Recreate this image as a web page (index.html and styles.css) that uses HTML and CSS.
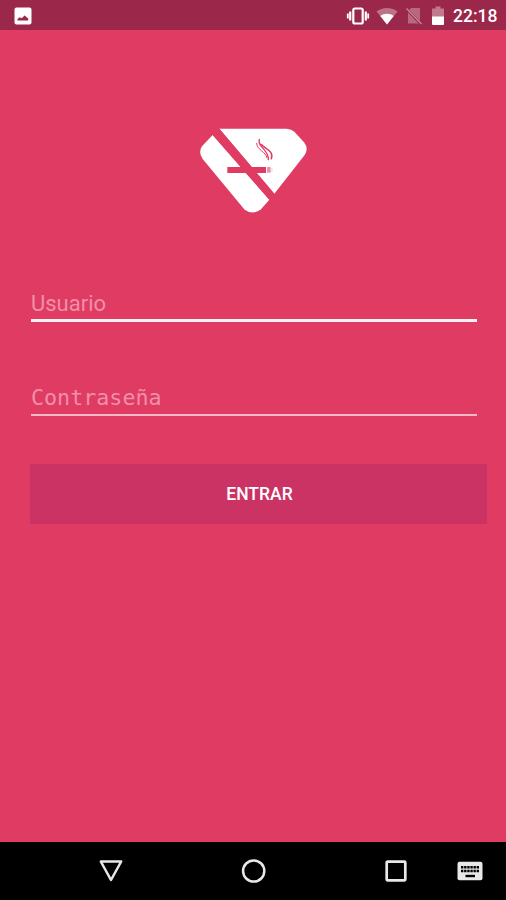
FILE: index.html
```html
<!DOCTYPE html>
<html lang="es">
<head>
<meta charset="utf-8">
<title>Entrar</title>
<link rel="stylesheet" href="styles.css">
</head>
<body>

<header class="status">
  <svg class="picture" width="18" height="18" viewBox="0 0 18 18">
    <rect x="0.5" y="0.5" width="17" height="17" rx="2" fill="#fff"/>
    <path d="M3.500 13.500v-1.500l2.200-1.800 2 1 2.900-2.600 3.600 3v1.900z" fill="#9b274b"/>
  </svg>
  <svg class="vibrate" width="24" height="20" viewBox="0 0 24 20" fill="none" stroke="#fff">
    <rect x="7.300" y="2.500" width="9.400" height="15" rx="1.500" stroke-width="2.200"/>
    <path d="M4.200 5.500v9M19.800 5.500v9" stroke-width="2.200"/>
    <path d="M1.800 7.500v5M22.200 7.500v5" stroke-width="1.800"/>
  </svg>
  <svg class="wifi" width="22" height="18" viewBox="0 0 22 18">
    <path d="M11 17.500L0.500 4.500C6-0.200 16-0.200 21.500 4.500z" fill="#fff" opacity=".35"/>
    <path d="M11 17.500L4.300 9C8 6 14 6 17.700 9z" fill="#fff"/>
  </svg>
  <svg class="sim" width="16" height="18" viewBox="0 0 16 18">
    <path d="M5 1h9v15.500H2V4z" fill="#fff" opacity=".3"/>
    <path d="M0.500 2l14 14.500" stroke="#9b274b" stroke-width="2.600"/>
    <path d="M0.500 1.500l15 15.500" stroke="#c98ba0" stroke-width="1.200"/>
  </svg>
  <svg class="battery" width="12" height="20" viewBox="0 0 12 20">
    <path d="M3.500 0.500h5v2H12V11H0V2.500h3.500z" fill="#fff" opacity=".38"/>
    <path d="M0 10.500h12v7.500q0 1-1 1H1q-1 0-1-1z" fill="#fff"/>
  </svg>
  <span class="clock">22:18</span>
</header>

<main class="login">
  <svg class="logo" width="110" height="88" viewBox="24 36 330 264">
    <g fill="#fff">
      <path d="M88 41H290Q305 42 313 50L342 82Q357 101 344 120L253 236Z"/>
      <path d="M68 60L238 254L213 283Q190 302 164 284L38 132Q24 112 36 94Z"/>
    </g>
    <!-- cigarette -->
    <path d="M112 156H228V174H112Z" fill="#df3b63"/>
    <path d="M88 41L68 60L238 254L253 236Z" fill="#df3b63"/>
    <rect x="231" y="156" width="11" height="17" rx="2" fill="#ee91a7"/>
    <path d="M245 159q3 5 0 12" stroke="#f5b9c7" stroke-width="2" fill="none"/>
    <!-- smoke -->
    <g fill="none" stroke="#df3b63" stroke-linecap="round">
      <path d="M208 73C201 97 238 104 235 134" stroke-width="4"/>
      <path d="M200 85C201 106 228 110 231 128" stroke-width="3"/>
      <path d="M215 89C227 103 252 107 244 131" stroke-width="4.500"/>
    </g>
  </svg>
  <form class="form">
    <input class="field user" type="text" placeholder="Usuario" aria-label="Usuario">
    <input class="field pass" type="password" placeholder="Contraseña" aria-label="Contraseña">
    <button class="enter" type="button">ENTRAR</button>
  </form>
</main>

<nav class="navbar">
  <svg class="back" width="26" height="24" viewBox="0 0 26 24">
    <path d="M2.800 2.500H23.200L13 21z" fill="none" stroke="#e8e8e8" stroke-width="2.500" stroke-linejoin="round"/>
  </svg>
  <svg class="home" width="26" height="26" viewBox="0 0 26 26">
    <circle cx="12.700" cy="13" r="10.600" fill="none" stroke="#e8e8e8" stroke-width="2.500"/>
  </svg>
  <svg class="recent" width="22" height="22" viewBox="0 0 22 22">
    <rect x="1.700" y="1.700" width="18.600" height="18.600" rx="0.800" fill="none" stroke="#e8e8e8" stroke-width="2.700"/>
  </svg>
  <svg class="keyboard" width="26" height="20" viewBox="0 0 26 20">
    <rect x="0.500" y="0.700" width="25" height="18.600" rx="2" fill="#e8e8e8"/>
    <path d="M4 6.200h18M4 10h18" stroke="#000" stroke-width="2.400" stroke-dasharray="2.400 .72"/>
    <path d="M8.500 15h9.500" stroke="#000" stroke-width="2.400"/>
  </svg>
</nav>

</body>
</html>
```
FILE: styles.css
```css
* {
  box-sizing: border-box;
}

body {
  margin: 0;
  height: 900px;
  display: flex;
  flex-direction: column;
  background: #df3b63;
  font-family: Roboto, sans-serif;
  overflow: hidden;
}

svg {
  display: block;
  flex: none;
}

.status {
  height: 30px;
  display: flex;
  align-items: center;
  padding: 1px 9px 0 14px;
  background: #9b274b;
}

.vibrate {
  margin-left: auto;
}

.wifi {
  margin-left: 6px;
}

.sim {
  margin-left: 8px;
}

.battery {
  margin-left: 10px;
}

.clock {
  width: 44px;
  margin-left: 9px;
  color: #fff;
  font-size: 17.5px;
  font-weight: 500;
  line-height: 28px;
  white-space: nowrap;
}

.login {
  flex: 1;
  padding: 97px 19px 0 30px;
}

.logo {
  margin-left: 168px;
}

.form {
  display: flex;
  flex-direction: column;
  margin-top: 70px;
}

.field {
  height: 37px;
  margin: 0 10px 0 1px;
  padding: 0;
  border: 0;
  border-radius: 0;
  outline: 0;
  background: none;
  color: #fff;
}

.field::placeholder {
  color: #f18fa8;
  opacity: 1;
}

.user {
  padding-top: 2px;
  border-bottom: 3px solid #fff0f4;
  font-family: Roboto, sans-serif;
  font-size: 22px;
}

.pass {
  margin-top: 57px;
  padding-top: 2px;
  border-bottom: 2px solid #f7b8c8;
  font-family: "DejaVu Sans Mono", monospace;
  font-size: 21.7px;
}

.enter {
  height: 60px;
  margin-top: 48px;
  padding: 0 0 0 2px;
  border: 0;
  background: #cb3365;
  color: #fff;
  font-family: Roboto, sans-serif;
  font-size: 17.5px;
  font-weight: 500;
}

.navbar {
  height: 58px;
  display: flex;
  align-items: center;
  padding-left: 98px;
  background: #000;
}

.home {
  margin-left: 117px;
}

.recent {
  margin-left: 118px;
}

.keyboard {
  margin-left: 50px;
}
```
